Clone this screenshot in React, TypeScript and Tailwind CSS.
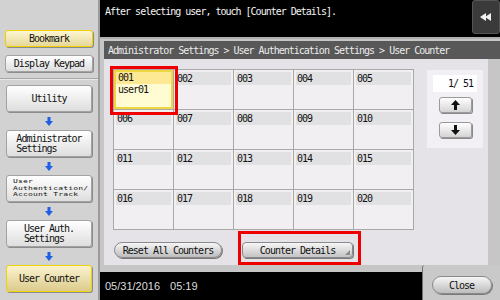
const mono = "font-['DejaVu_Sans_Mono',monospace] tracking-[-1px]";

const flow = [
  { label: ['Utility'], small: false, active: false },
  { label: ['Administrator', 'Settings'], small: false, active: false },
  { label: ['User', 'Authentication/', 'Account Track'], small: true, active: false },
  { label: ['User Auth.', 'Settings'], small: false, active: false },
  { label: ['User Counter'], small: false, active: true },
];

const cells = Array.from({ length: 20 }, (_, i) => String(i + 1).padStart(3, '0'));

function BlueArrow() {
  return (
    <svg width="8" height="9" viewBox="0 0 8 9">
      <rect x="2.5" y="0" width="3" height="4.5" fill="#1f5fe6" />
      <polygon points="0,4 8,4 4,9" fill="#1f5fe6" />
    </svg>
  );
}

function SideButton({ lines, small, active }: { lines: string[]; small: boolean; active: boolean }) {
  return (
    <div
      className={`h-[27px] rounded-[3px] border flex items-center justify-center shadow-[1px_1px_0_#8c8c8c] ${
        active
          ? 'border-[#f0d400] bg-gradient-to-b from-[#fbf3cf] to-[#dccb8c]'
          : 'border-[#a2a2a2] bg-gradient-to-b from-[#ffffff] to-[#dedede]'
      }`}
    >
      {small ? (
        <div className="font-['DejaVu_Sans_Mono',monospace] text-[8px] leading-[9.5px] tracking-[0.2px] text-[#111] w-full pl-[6px] scale-y-[0.66]">
          {lines.map((l) => (
            <div key={l}>{l}</div>
          ))}
        </div>
      ) : (
        <div className={`${mono} text-[10px] leading-[10px] text-[#111]`}>
          {lines.map((l) => (
            <div key={l}>{l}</div>
          ))}
        </div>
      )}
    </div>
  );
}

export default function App() {
  return (
    <div className="w-[500px] h-[300px] flex overflow-hidden bg-black">
      {/* Sidebar */}
      <div className="w-[100px] h-full bg-[#d2d2d2] border-r-2 border-[#9c9c9c] flex flex-col">
        <div className="px-[5px] pt-[30px] pb-[6px] flex flex-col gap-[8px]">
          <div className="h-[17px] rounded-[3px] border border-[#efd000] bg-gradient-to-b from-[#fdf6d2] to-[#e6d89a] shadow-[1px_1px_0_#8c8c8c] flex items-center justify-center">
            <span className={`${mono} text-[10px] text-[#111]`}>Bookmark</span>
          </div>
          <div className="h-[17px] rounded-[3px] border border-[#a2a2a2] bg-gradient-to-b from-[#ffffff] to-[#dedede] shadow-[1px_1px_0_#8c8c8c] flex items-center justify-center">
            <span className={`${mono} text-[10px] text-[#111]`}>Display Keypad</span>
          </div>
        </div>
        <div className="h-[2px] border-t border-[#a6a6a6] bg-[#e8e8e8]" />
        <div className="px-[6px] pt-[5px] flex flex-col">
          {flow.map((f, i) => (
            <div key={i} className="flex flex-col">
              {i > 0 && (
                <div className="h-[18px] flex items-center justify-center">
                  <BlueArrow />
                </div>
              )}
              <SideButton lines={f.label} small={f.small} active={f.active} />
            </div>
          ))}
        </div>
      </div>

      {/* Main column */}
      <div className="w-[400px] h-full flex flex-col">
        {/* Top message bar */}
        <div className="h-[37px] bg-black flex justify-between">
          <div className={`${mono} text-[10px] text-[#f4f4f4] pl-[5px] pt-[4px]`}>
            After selecting user, touch [Counter Details].
          </div>
          <div className="w-[28px] h-[34px] rounded-[3px] bg-[#3a3a3a] border border-[#555] flex items-center justify-center">
            <svg width="12" height="8" viewBox="0 0 12 8">
              <polygon points="0,4 6,0 6,8" fill="#f2f2f2" />
              <polygon points="5,4 11,0 11,8" fill="#f2f2f2" />
            </svg>
          </div>
        </div>

        {/* Panel */}
        <div className="h-[235px] bg-[#c6c6c6] border-t-2 border-[#b0b0b0] pt-[2px] pl-[4px] flex flex-col">
          <div className={`h-[18px] bg-[#585858] flex items-center pl-[4px] ${mono} text-[10px] text-[#ececec]`}>
            Administrator Settings &gt; User Authentication Settings &gt; User Counter
          </div>
          <div className="relative h-[206px] w-[384px] bg-[#e5e3e7] pl-[9px] pt-[10px]">
            <div className="flex items-start">
              {/* Grid */}
              <div className="grid grid-cols-5 w-[301px] border-l border-t border-[#a9a9a9]">
                {cells.map((c, i) =>
                  i === 0 ? (
                    <div key={c} className="w-[60px] h-[40px] border-r border-b border-[#a9a9a9] bg-[#f1eff2]">
                      <div className="w-full h-full border-2 border-[#eed640] bg-[#fffbd2]">
                        <div className={`h-[12px] bg-[#fde994] pl-[2px] ${mono} text-[10px] leading-[12px] text-[#111]`}>{c}</div>
                        <div className={`pl-[2px] ${mono} text-[10px] leading-[12px] text-[#111]`}>user01</div>
                      </div>
                    </div>
                  ) : (
                    <div key={c} className="w-[60px] h-[40px] border-r border-b border-[#a9a9a9] bg-[#f1eff2] p-[2px]">
                      <div className={`h-[13px] bg-[#e1e0e3] pl-[1px] ${mono} text-[10px] leading-[13px] text-[#111]`}>{c}</div>
                    </div>
                  )
                )}
              </div>

              {/* Pager */}
              <div className="ml-[13px] mt-[1px] w-[56px] h-[78px] bg-[#f2f0f4] flex flex-col items-center pt-[5px]">
                <div className={`w-[44px] h-[17px] bg-white flex items-center justify-end pr-[4px] ${mono} text-[10px] text-[#111]`}>
                  1/ 51
                </div>
                <div className="mt-[5px] w-[33px] h-[16px] rounded-[3px] border border-[#9a9a9a] bg-gradient-to-b from-[#ffffff] to-[#d4d4d4] shadow-[1px_1px_0_#8a8a8a] flex items-center justify-center">
                  <svg width="9" height="10" viewBox="0 0 9 10">
                    <polygon points="4.5,0 9,5 6,5 6,10 3,10 3,5 0,5" fill="#111" />
                  </svg>
                </div>
                <div className="mt-[9px] w-[33px] h-[16px] rounded-[3px] border border-[#9a9a9a] bg-gradient-to-b from-[#ffffff] to-[#d4d4d4] shadow-[1px_1px_0_#8a8a8a] flex items-center justify-center">
                  <svg width="9" height="10" viewBox="0 0 9 10">
                    <polygon points="4.5,10 9,5 6,5 6,0 3,0 3,5 0,5" fill="#111" />
                  </svg>
                </div>
              </div>
            </div>

            {/* Bottom buttons */}
            <div className="flex items-center mt-[12px] pl-[1px] gap-[20px]">
              <div className={`w-[108px] h-[16px] rounded-full border border-[#8a8a8a] bg-gradient-to-b from-[#f6f6f6] to-[#bdbdbd] shadow-[1px_1px_0_#7a7a7a] flex items-center justify-center ${mono} text-[10px] text-[#111]`}>
                Reset All Counters
              </div>
              <div className={`relative w-[111px] h-[16px] rounded-[4px] border border-[#8a8a8a] bg-gradient-to-b from-[#f6f6f6] to-[#c4c4c4] shadow-[1px_1px_0_#7a7a7a] flex items-center justify-center ${mono} text-[10px] text-[#111]`}>
                Counter Details
                <svg className="absolute right-[2px] bottom-[2px]" width="5" height="5" viewBox="0 0 5 5">
                  <polygon points="5,0 5,5 0,5" fill="#8c8c8c" />
                </svg>
              </div>
            </div>

            {/* Red annotation boxes */}
            <div className="absolute left-[6px] top-[7px] w-[68px] h-[49px] border-[3px] border-[#ee0000]" />
            <div className="absolute left-[134px] top-[172px] w-[123px] h-[34px] border-[3px] border-[#ee0000]" />
          </div>
        </div>

        {/* Bottom bar */}
        <div className="h-[28px] flex">
          <div className="w-[322px] bg-black flex items-center pl-[5px] gap-[10px] font-['Liberation_Sans',Arial,sans-serif] text-[11px] text-[#dcdcdc]">
            <span>05/31/2016</span>
            <span>05:19</span>
          </div>
          <div className="w-[78px] -mt-[7px] bg-[#c9c9c9] border-l border-[#707070] rounded-tl-[3px] flex items-center justify-center pt-[5px]">
            <div className={`w-[60px] h-[18px] rounded-full border border-[#8a8a8a] bg-gradient-to-b from-[#f6f6f6] to-[#bdbdbd] shadow-[1px_1px_0_#7a7a7a] flex items-center justify-center ${mono} text-[10px] text-[#111]`}>
              Close
            </div>
          </div>
        </div>
      </div>
    </div>
  );
}
